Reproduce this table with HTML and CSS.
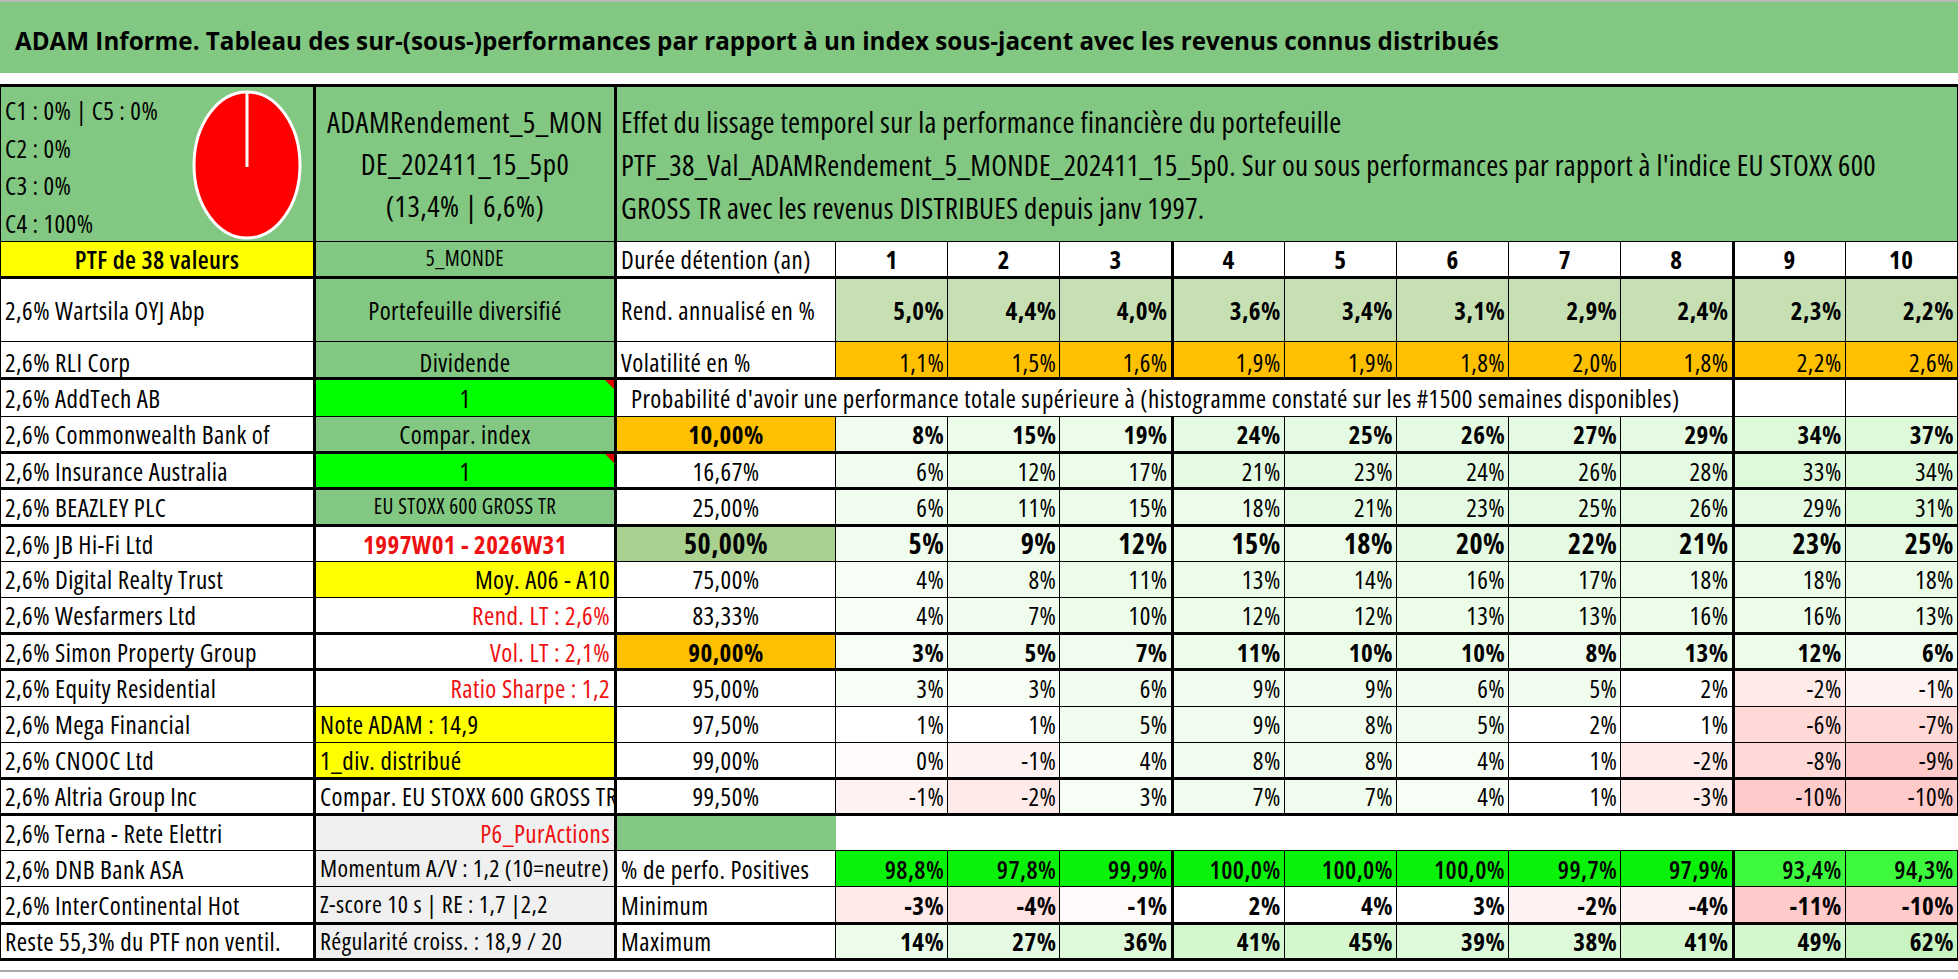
FILE: index.html
```html
<!DOCTYPE html>
<html lang="fr">
<head>
<meta charset="utf-8">
<title>ADAM Informe</title>
<link rel="stylesheet" href="styles.css">
</head>
<body>
<div class="title">ADAM Informe. Tableau des sur-(sous-)performances par rapport à un index sous-jacent avec les revenus connus distribués</div>
<div class="gap"></div>
<table class="sheet">
<colgroup>
<col class="cA"><col class="cB"><col class="cC">
<col class="cN"><col class="cN"><col class="cN"><col class="cN tk"><col class="cN"><col class="cN"><col class="cN"><col class="cN"><col class="cN tk"><col class="cN">
</colgroup>
<tbody>
<tr class="rh">
<td class="gr hA"><div class="hA-in"><div class="clist"><div>C1 : 0% | C5 : 0%</div><div>C2 : 0%</div><div>C3 : 0%</div><div>C4 : 100%</div></div>
<svg class="pie" width="112" height="152" viewBox="0 0 112 152"><ellipse cx="56" cy="76" rx="53" ry="73" fill="#ff0000" stroke="#ffffff" stroke-width="3"/><line x1="56" y1="78" x2="56" y2="3" stroke="#ffffff" stroke-width="3"/></svg></div></td>
<td class="gr hB">ADAMRendement_5_MON<br>DE_202411_15_5p0<br>(13,4% | 6,6%)</td>
<td class="gr hC" colspan="11">Effet du lissage temporel sur la performance financière du portefeuille<br>PTF_38_Val_ADAMRendement_5_MONDE_202411_15_5p0. Sur ou sous performances par rapport à l'indice EU STOXX 600<br>GROSS TR avec les revenus DISTRIBUES depuis janv 1997.</td>
</tr>
<tr class="r36 tb">
<td class="ye c sb">PTF de 38 valeurs</td>
<td class="gr c sm">5_MONDE</td>
<td>Durée détention (an)</td>
<td class="c b">1</td><td class="c b">2</td><td class="c b">3</td><td class="c b">4</td><td class="c b">5</td><td class="c b">6</td><td class="c b">7</td><td class="c b">8</td><td class="c b">9</td><td class="c b">10</td>
</tr>
<tr class="r64">
<td>2,6% Wartsila OYJ Abp</td>
<td class="gr c">Portefeuille diversifié</td>
<td>Rend. annualisé en %</td>
<td class="n b lg">5,0%</td><td class="n b lg">4,4%</td><td class="n b lg">4,0%</td><td class="n b lg">3,6%</td><td class="n b lg">3,4%</td><td class="n b lg">3,1%</td><td class="n b lg">2,9%</td><td class="n b lg">2,4%</td><td class="n b lg">2,3%</td><td class="n b lg">2,2%</td>
</tr>
<tr class="r37 tb vb">
<td>2,6% RLI Corp</td>
<td class="gr c">Dividende</td>
<td>Volatilité en %</td>
<td class="n l or">1,1%</td><td class="n l or">1,5%</td><td class="n l or">1,6%</td><td class="n l or">1,9%</td><td class="n l or">1,9%</td><td class="n l or">1,8%</td><td class="n l or">2,0%</td><td class="n l or">1,8%</td><td class="n l or">2,2%</td><td class="n l or">2,6%</td>
</tr>
<tr class="r38">
<td>2,6% AddTech AB</td>
<td class="bg c cm">1</td>
<td class="prob" colspan="9">Probabilité d'avoir une performance totale supérieure à (histogramme constaté sur les #1500 semaines disponibles)</td>
<td></td><td></td>
</tr>
<tr class="rr tb">
<td>2,6% Commonwealth Bank of</td>
<td class="gr c">Compar. index</td>
<td class="or c b">10,00%</td>
<td class="n b g1">8%</td><td class="n b g2">15%</td><td class="n b g2">19%</td><td class="n b g3">24%</td><td class="n b g3">25%</td><td class="n b g3">26%</td><td class="n b g3">27%</td><td class="n b g3">29%</td><td class="n b g4">34%</td><td class="n b g4">37%</td>
</tr>
<tr class="rr tb">
<td>2,6% Insurance Australia</td>
<td class="bg c cm">1</td>
<td class="c">16,67%</td>
<td class="n l g1">6%</td><td class="n l g2">12%</td><td class="n l g2">17%</td><td class="n l g3">21%</td><td class="n l g3">23%</td><td class="n l g3">24%</td><td class="n l g3">26%</td><td class="n l g3">28%</td><td class="n l g4">33%</td><td class="n l g4">34%</td>
</tr>
<tr class="rr tb">
<td>2,6% BEAZLEY PLC</td>
<td class="gr c xs">EU STOXX 600 GROSS TR</td>
<td class="c">25,00%</td>
<td class="n l g1">6%</td><td class="n l g2">11%</td><td class="n l g2">15%</td><td class="n l g2">18%</td><td class="n l g3">21%</td><td class="n l g3">23%</td><td class="n l g3">25%</td><td class="n l g3">26%</td><td class="n l g3">29%</td><td class="n l g4">31%</td>
</tr>
<tr class="rr big">
<td>2,6% JB Hi-Fi Ltd</td>
<td class="c red b">1997W01 - 2026W31</td>
<td class="md c b xl">50,00%</td>
<td class="n b g1">5%</td><td class="n b g1">9%</td><td class="n b g2">12%</td><td class="n b g2">15%</td><td class="n b g2">18%</td><td class="n b g3">20%</td><td class="n b g3">22%</td><td class="n b g3">21%</td><td class="n b g3">23%</td><td class="n b g3">25%</td>
</tr>
<tr class="rr">
<td>2,6% Digital Realty Trust</td>
<td class="ye r">Moy. A06 - A10</td>
<td class="c">75,00%</td>
<td class="n l g0">4%</td><td class="n l g1">8%</td><td class="n l g2">11%</td><td class="n l g2">13%</td><td class="n l g2">14%</td><td class="n l g2">16%</td><td class="n l g2">17%</td><td class="n l g2">18%</td><td class="n l g2">18%</td><td class="n l g2">18%</td>
</tr>
<tr class="rr tb">
<td>2,6% Wesfarmers Ltd</td>
<td class="r red">Rend. LT : 2,6%</td>
<td class="c">83,33%</td>
<td class="n l g0">4%</td><td class="n l g1">7%</td><td class="n l g2">10%</td><td class="n l g2">12%</td><td class="n l g2">12%</td><td class="n l g2">13%</td><td class="n l g2">13%</td><td class="n l g2">16%</td><td class="n l g2">16%</td><td class="n l g2">13%</td>
</tr>
<tr class="rr tb">
<td>2,6% Simon Property Group</td>
<td class="r red">Vol. LT : 2,1%</td>
<td class="or c b">90,00%</td>
<td class="n b g0">3%</td><td class="n b g1">5%</td><td class="n b g1">7%</td><td class="n b g2">11%</td><td class="n b g2">10%</td><td class="n b g2">10%</td><td class="n b g1">8%</td><td class="n b g2">13%</td><td class="n b g2">12%</td><td class="n b g1">6%</td>
</tr>
<tr class="rr">
<td>2,6% Equity Residential</td>
<td class="r red">Ratio Sharpe : 1,2</td>
<td class="c">95,00%</td>
<td class="n l g0">3%</td><td class="n l g0">3%</td><td class="n l g1">6%</td><td class="n l g1">9%</td><td class="n l g1">9%</td><td class="n l g1">6%</td><td class="n l g1">5%</td><td class="n l">2%</td><td class="n l r2">-2%</td><td class="n l r1">-1%</td>
</tr>
<tr class="rr">
<td>2,6% Mega Financial</td>
<td class="ye">Note ADAM : 14,9</td>
<td class="c">97,50%</td>
<td class="n l">1%</td><td class="n l">1%</td><td class="n l g1">5%</td><td class="n l g1">9%</td><td class="n l g1">8%</td><td class="n l g1">5%</td><td class="n l">2%</td><td class="n l">1%</td><td class="n l r4">-6%</td><td class="n l r4">-7%</td>
</tr>
<tr class="rr tb">
<td>2,6% CNOOC Ltd</td>
<td class="ye">1_div. distribué</td>
<td class="c">99,00%</td>
<td class="n l r0">0%</td><td class="n l r1">-1%</td><td class="n l g0">4%</td><td class="n l g1">8%</td><td class="n l g1">8%</td><td class="n l g0">4%</td><td class="n l">1%</td><td class="n l r2">-2%</td><td class="n l r4">-8%</td><td class="n l r5">-9%</td>
</tr>
<tr class="rr tb">
<td>2,6% Altria Group Inc</td>
<td>Compar. EU STOXX 600 GROSS TR</td>
<td class="c">99,50%</td>
<td class="n l r1">-1%</td><td class="n l r2">-2%</td><td class="n l g0">3%</td><td class="n l g1">7%</td><td class="n l g1">7%</td><td class="n l g0">4%</td><td class="n l">1%</td><td class="n l r2">-3%</td><td class="n l r5">-10%</td><td class="n l r5">-10%</td>
</tr>
<tr class="rr">
<td>2,6% Terna - Rete Elettri</td>
<td class="gy r red">P6_PurActions</td>
<td class="gr"></td>
<td class="void"></td><td class="void"></td><td class="void"></td><td class="void"></td><td class="void"></td><td class="void"></td><td class="void"></td><td class="void"></td><td class="void"></td><td class="void"></td>
</tr>
<tr class="rr">
<td>2,6% DNB Bank ASA</td>
<td class="gy sm2">Momentum A/V : 1,2 (10=neutre)</td>
<td>% de perfo. Positives</td>
<td class="n sb pg">98,8%</td><td class="n sb pg">97,8%</td><td class="n sb pg">99,9%</td><td class="n sb pg">100,0%</td><td class="n sb pg">100,0%</td><td class="n sb pg">100,0%</td><td class="n sb pg">99,7%</td><td class="n sb pg">97,9%</td><td class="n sb pg2">93,4%</td><td class="n sb pg2">94,3%</td>
</tr>
<tr class="rr tb">
<td>2,6% InterContinental Hot</td>
<td class="gy sm2">Z-score 10 s | RE : 1,7 |2,2</td>
<td>Minimum</td>
<td class="n b r2">-3%</td><td class="n b r3">-4%</td><td class="n b r0">-1%</td><td class="n b">2%</td><td class="n b">4%</td><td class="n b">3%</td><td class="n b r1">-2%</td><td class="n b r1">-4%</td><td class="n b r5">-11%</td><td class="n b r5">-10%</td>
</tr>
<tr class="rr tb">
<td>Reste 55,3% du PTF non ventil.</td>
<td class="gy sm2">Régularité croiss. : 18,9 / 20</td>
<td>Maximum</td>
<td class="n b g2">14%</td><td class="n b g3">27%</td><td class="n b g4">36%</td><td class="n b g5">41%</td><td class="n b g5">45%</td><td class="n b g4">39%</td><td class="n b g4">38%</td><td class="n b g5">41%</td><td class="n b g5">49%</td><td class="n b g6">62%</td>
</tr>
</tbody>
</table>
<div class="foot"></div>
</body>
</html>
```
FILE: styles.css
```css
* { box-sizing: border-box; }
html, body { margin: 0; padding: 0; background: #ffffff; }
body {
  font-family: "Open Sans", "Liberation Sans", sans-serif;
  font-stretch: 75%;
  color: #000000;
  width: 1958px;
  height: 979px;
  overflow: hidden;
}
.title {
  height: 73px;
  background: #82c882;
  border-top: 2px solid #b9b9b9;
  padding: 5px 0 0 15px;
  display: flex;
  align-items: center;
  font-size: 24.2px;
  font-weight: 700;
  font-stretch: 100%;
  white-space: nowrap;
}
.gap { height: 11px; }
.sheet {
  border-collapse: collapse;
  table-layout: fixed;
  width: 1957px;
  font-size: 25px;
  font-weight: 500;
  letter-spacing: 0.45px;
}
.cA { width: 314px; }
.cB { width: 301px; }
.cC { width: 220px; }
.cN { width: 112.2px; }
col.tk { border-left: 3px solid #000; }
.cB, .cC { border-left: 3px solid #000; }
.sheet td {
  border: 1px solid #000;
  padding: 0 4px;
  white-space: nowrap;
  overflow: hidden;
  vertical-align: middle;
  line-height: 1.2;
}
.sheet tr:first-child td { border-top: 3px solid #000; }
.sheet tr.tb td { border-bottom: 3px solid #000; }
.rh { height: 156px; }
.r36 { height: 36px; }
.r64 { height: 64px; }
.r37 { height: 37px; }
.r38 { height: 38px; }
.rr { height: 36.2px; }
.vb td { vertical-align: bottom; padding-bottom: 0; }

/* header cells */
.sheet td.hA { padding: 0; vertical-align: top; }
.hA-in {
  height: 153px;
  display: flex;
  justify-content: space-between;
  align-items: center;
  padding: 0 10px 0 4px;
}
.clist {
  align-self: stretch;
  display: flex;
  flex-direction: column;
  padding-top: 5px;
  font-size: 25px;
  line-height: 37.5px;
  letter-spacing: 0.4px;
}
.pie { display: block; margin-top: 2px; }
.sheet td.hB {
  text-align: center;
  font-size: 29px;
  line-height: 42px;
  padding: 0 2px;
  letter-spacing: 0.5px;
}
.sheet td.hC {
  font-size: 29px;
  line-height: 43px;
  padding: 0 4px;
  letter-spacing: 0.3px;
}

/* text styles */
.c { text-align: center; }
.r { text-align: right; }
.sheet td.n { text-align: right; padding: 0 3px 0 2px; }
.b { font-weight: 700; }
.sb { font-weight: 600; }
.l { font-weight: 400; }
.sm { font-size: 21px; }
.xs { font-size: 21px; }
.sm2 { font-size: 24px; }
.red { color: #ee1111; }
.big td.n { font-size: 28px; }
.xl { font-size: 28px; }
.sheet td.prob { padding-left: 14px; }

/* fills */
.gr { background: #82c882; }
.lg { background: #c6e0b4; }
.or { background: #ffc000; }
.ye { background: #ffff00; }
.bg { background: #00ff00; }
.md { background: #a9d08e; }
.gy { background: #f0f0f0; }
.pg { background: #0af20a; }
.pg2 { background: #3ef83e; }
.g0 { background: #f6fef5; }
.g1 { background: #f0fdee; }
.g2 { background: #ebfce8; }
.g3 { background: #e5fae2; }
.g4 { background: #def9da; }
.g5 { background: #d4f7cf; }
.g6 { background: #c8f4c2; }
.r0 { background: #fffafa; }
.r1 { background: #fff2f2; }
.r2 { background: #ffeaea; }
.r3 { background: #ffe2e2; }
.r4 { background: #ffd8d8; }
.r5 { background: #ffcaca; }

/* comment marker */
.cm { position: relative; }
.cm::after {
  content: "";
  position: absolute;
  top: 0;
  right: 0;
  border-left: 9px solid transparent;
  border-top: 9px solid #e00000;
}

/* empty separator row */
.sheet td.void { border-left-style: hidden; border-right-style: hidden; background: #fff; }

.foot {
  margin-top: 9px;
  border-top: 2px solid #a8a8a8;
}
```
